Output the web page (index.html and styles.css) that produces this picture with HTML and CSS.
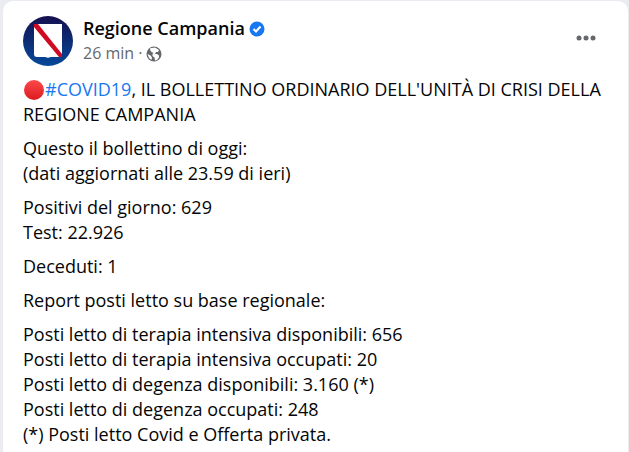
FILE: index.html
```html
<!DOCTYPE html>
<html lang="it">
<head>
<meta charset="utf-8">
<title>Regione Campania</title>
<link rel="stylesheet" href="styles.css">
</head>
<body>
<article class="post">
	<header class="post_head">
		<a class="avatar" href="#" aria-label="Regione Campania">
			<svg viewBox="0 0 50 50" width="50" height="50">
				<defs>
					<linearGradient id="sky" x1="0" y1="0" x2="0" y2="1">
						<stop offset="0" stop-color="#15104f"/>
						<stop offset="1" stop-color="#06489a"/>
					</linearGradient>
				</defs>
				<circle cx="25" cy="25" r="25" fill="url(#sky)"/>
				<path d="M11 8h28v32q0 1-1 1h-9q-3 0-4 1-1-1-4-1h-7q-3 0-3-3z" fill="#fff"/>
				<path d="M11 8h4l24 30v3h-3l-25-30z" fill="#cf0a22"/>
			</svg>
		</a>
		<div class="info">
			<h2 class="name">
				<a href="#">Regione Campania</a>
				<svg viewBox="0 0 16 16" width="16" height="16">
					<circle cx="8" cy="8" r="7.500" fill="#1877f2"/>
					<path d="M4.500 8l2.500 2.500 4.500-5" fill="none" stroke="#fff" stroke-width="2"/>
				</svg>
			</h2>
			<div class="meta">
				<a href="#">26 min</a>
				<span>·</span>
				<svg viewBox="0 0 16 16" width="16" height="16">
					<circle cx="8" cy="8" r="7.500" fill="#65676b"/>
					<path d="M6 2l3-0.500 4 2.500-1 2-2 0-1 2 2 0 2 1.500 0 2-2 2.500-2 0.500-0.500-3-2-1.500 0-2 1-1-2-1-1.500-2 0.500-2z" fill="#fff"/>
					<path d="M1.500 8l3 1.500 1.500 2-0.500 2.500-2.500-2z" fill="#fff"/>
				</svg>
			</div>
		</div>
		<button class="more" type="button" aria-label="Altro">
			<svg viewBox="0 0 20 6" width="20" height="6" fill="#65676b">
				<circle cx="3" cy="3" r="2.500"/>
				<circle cx="10" cy="3" r="2.500"/>
				<circle cx="17" cy="3" r="2.500"/>
			</svg>
		</button>
	</header>
	<div class="text">
		<p><svg class="dot" viewBox="0 0 22 22" width="22" height="22"><defs><linearGradient id="red" x1="0" y1="0" x2="0" y2="1"><stop offset="0" stop-color="#fb4a4a"/><stop offset="1" stop-color="#dc1a20"/></linearGradient></defs><circle cx="11" cy="11" r="10" fill="url(#red)"/></svg><a class="tag" href="#">#COVID19</a>, IL BOLLETTINO ORDINARIO DELL'UNITÀ DI CRISI DELLA REGIONE CAMPANIA</p>
		<p>Questo il bollettino di oggi:<br>(dati aggiornati alle 23.59 di ieri)</p>
		<p>Positivi del giorno: 629<br>Test: 22.926</p>
		<p>Deceduti: 1</p>
		<p>Report posti letto su base regionale:</p>
		<p>Posti letto di terapia intensiva disponibili: 656<br>Posti letto di terapia intensiva occupati: 20<br>Posti letto di degenza disponibili: 3.160 (*)<br>Posti letto di degenza occupati: 248<br>(*) Posti letto Covid e Offerta privata.</p>
	</div>
</article>
</body>
</html>
```
FILE: styles.css
```css
*{margin:0;padding:0;box-sizing:border-box;}
body{background:#ebecf1;font:18px/25px "Open Sans","Noto Sans",sans-serif;color:#050505;padding:1px 1px 0 3px;overflow:hidden;}
a{color:inherit;text-decoration:none;}
svg{display:block;}
.post{background:#fff;border-radius:10px 10px 0 0;padding:15px 20px;}
.post_head{display:flex;align-items:flex-start;gap:10px;}
.info{flex:1;}
.name{display:flex;align-items:center;gap:4px;font-size:18px;font-weight:600;line-height:25px;}
.meta{display:flex;align-items:center;gap:4px;font-size:16px;line-height:25px;color:#65676b;}
.more{display:flex;align-items:center;justify-content:center;width:44px;height:44px;border:0;background:none;cursor:pointer;}
.text{padding-top:11px;}
.text p{margin-bottom:9px;}
.dot{display:inline-block;vertical-align:-5px;}
.tag{color:#1877f2;}
```
